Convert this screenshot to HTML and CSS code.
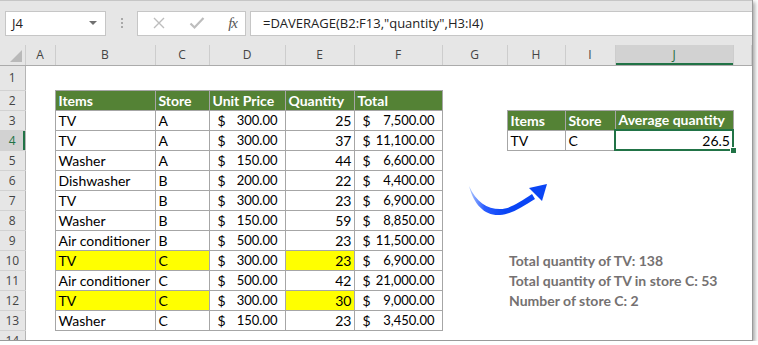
FILE: index.html
```html
<!DOCTYPE html>
<html lang="en">
<head>
  <meta charset="UTF-8">
  <title>DAVERAGE example</title>
  <link rel="stylesheet" href="styles.css">
</head>
<body>
  <div class="window">
    <div class="toolbar">
      <div class="namebox"><span>J4</span><span class="caret"></span></div>
      <div class="grip"><i></i><i></i><i></i></div>
      <div class="fxbox">
        <svg width="14" height="14" viewBox="0 0 14 14"><path d="M2 2 L12 12 M12 2 L2 12" stroke="#bdbdbd" stroke-width="1.4" fill="none"/></svg>
        <svg width="16" height="14" viewBox="0 0 16 14"><path d="M1.5 7.5 L5.5 11.5 L14.5 2" stroke="#bdbdbd" stroke-width="2.2" fill="none"/></svg>
        <span class="fx">fx</span>
      </div>
      <div class="formula">=DAVERAGE(B2:F13,"quantity",H3:I4)</div>
    </div>

    <table class="sheet">
      <colgroup>
        <col style="width:25px"><col style="width:30px"><col style="width:100px"><col style="width:54px">
        <col style="width:76px"><col style="width:69px"><col style="width:88px"><col style="width:65px">
        <col style="width:58px"><col style="width:50px"><col style="width:118px"><col>
      </colgroup>
      <tr class="colhead">
        <th class="corner"><span class="tri"></span></th>
        <th>A</th><th>B</th><th>C</th><th>D</th><th>E</th><th>F</th><th>G</th><th>H</th><th>I</th><th class="on">J</th><th></th>
      </tr>
      <tr class="r1"><th class="rh">1</th><td></td><td></td><td></td><td></td><td></td><td></td><td></td><td></td><td></td><td></td><td></td></tr>
      <tr><th class="rh">2</th><td></td>
        <td class="c hd">Items</td><td class="c hd">Store</td><td class="c hd">Unit Price</td><td class="c hd">Quantity</td><td class="c hd">Total</td>
        <td></td><td></td><td></td><td></td><td></td></tr>
      <tr><th class="rh">3</th><td></td>
        <td class="c">TV</td><td class="c">A</td><td class="c acc"><b>$</b>300.00</td><td class="c num">25</td><td class="c acc"><b>$</b>7,500.00</td>
        <td></td><td class="c hd">Items</td><td class="c hd">Store</td><td class="c hd">Average quantity</td><td></td></tr>
      <tr><th class="rh on">4</th><td></td>
        <td class="c">TV</td><td class="c">A</td><td class="c acc"><b>$</b>300.00</td><td class="c num">37</td><td class="c acc"><b>$</b>11,100.00</td>
        <td></td><td class="c">TV</td><td class="c">C</td><td class="c num sel">26.5<span class="handle"></span></td><td></td></tr>
      <tr><th class="rh">5</th><td></td>
        <td class="c">Washer</td><td class="c">A</td><td class="c acc"><b>$</b>150.00</td><td class="c num">44</td><td class="c acc"><b>$</b>6,600.00</td>
        <td></td><td></td><td></td><td></td><td></td></tr>
      <tr><th class="rh">6</th><td></td>
        <td class="c">Dishwasher</td><td class="c">B</td><td class="c acc"><b>$</b>200.00</td><td class="c num">22</td><td class="c acc"><b>$</b>4,400.00</td>
        <td></td><td></td><td></td><td></td><td></td></tr>
      <tr><th class="rh">7</th><td></td>
        <td class="c">TV</td><td class="c">B</td><td class="c acc"><b>$</b>300.00</td><td class="c num">23</td><td class="c acc"><b>$</b>6,900.00</td>
        <td></td><td></td><td></td><td></td><td></td></tr>
      <tr><th class="rh">8</th><td></td>
        <td class="c">Washer</td><td class="c">B</td><td class="c acc"><b>$</b>150.00</td><td class="c num">59</td><td class="c acc"><b>$</b>8,850.00</td>
        <td></td><td></td><td></td><td></td><td></td></tr>
      <tr><th class="rh">9</th><td></td>
        <td class="c">Air conditioner</td><td class="c">B</td><td class="c acc"><b>$</b>500.00</td><td class="c num">23</td><td class="c acc"><b>$</b>11,500.00</td>
        <td></td><td></td><td></td><td></td><td></td></tr>
      <tr><th class="rh">10</th><td></td>
        <td class="c hl">TV</td><td class="c hl">C</td><td class="c acc"><b>$</b>300.00</td><td class="c num hl">23</td><td class="c acc"><b>$</b>6,900.00</td>
        <td></td><td class="note">Total quantity of TV: 138</td><td></td><td></td><td></td></tr>
      <tr><th class="rh">11</th><td></td>
        <td class="c">Air conditioner</td><td class="c">C</td><td class="c acc"><b>$</b>500.00</td><td class="c num">42</td><td class="c acc"><b>$</b>21,000.00</td>
        <td></td><td class="note">Total quantity of TV in store C: 53</td><td></td><td></td><td></td></tr>
      <tr><th class="rh">12</th><td></td>
        <td class="c hl">TV</td><td class="c hl">C</td><td class="c acc"><b>$</b>300.00</td><td class="c num hl">30</td><td class="c acc"><b>$</b>9,000.00</td>
        <td></td><td class="note">Number of store C: 2</td><td></td><td></td><td></td></tr>
      <tr><th class="rh">13</th><td></td>
        <td class="c">Washer</td><td class="c">C</td><td class="c acc"><b>$</b>150.00</td><td class="c num">23</td><td class="c acc"><b>$</b>3,450.00</td>
        <td></td><td></td><td></td><td></td><td></td></tr>
      <tr><th class="rh">14</th><td></td><td></td><td></td><td></td><td></td><td></td><td></td><td></td><td></td><td></td><td></td></tr>
    </table>

    <svg class="arrow" width="753" height="341" viewBox="0 0 753 341">
      <defs>
        <linearGradient id="blue" gradientUnits="userSpaceOnUse" x1="468" y1="0" x2="505" y2="0">
          <stop offset="0" stop-color="#b9d0ff"/>
          <stop offset="0.45" stop-color="#2a5cff"/>
          <stop offset="1" stop-color="#0a45f5"/>
        </linearGradient>
      </defs>
      <path d="M469 186 C474 205 485 216 500 215 C512 214 522 207 535 199 L532 194 C520 202 510 209 500 209 C487 209 476 202 469 186 Z" fill="url(#blue)"/>
      <path d="M547 184 L529 188 L542 201 Z" fill="#0a45f5"/>
    </svg>
  </div>
</body>
</html>
```

FILE: styles.css
```css
body {
  margin: 0;
  background: #fff;
  font-family: Lato, "Liberation Sans", sans-serif;
}
.window {
  position: relative;
  width: 752px;
  height: 340px;
  overflow: hidden;
  background: #fff;
  border-right: 1px solid #9a9a9a;
  border-bottom: 1px solid #9a9a9a;
  box-shadow: 2px 2px 4px rgba(0,0,0,0.35);
}
.toolbar {
  display: flex;
  align-items: center;
  height: 44px;
  padding-left: 5px;
  background: #e6e6e6;
  border-top: 1px solid #c6c6c6;
}
.namebox, .fxbox, .formula {
  box-sizing: border-box;
  height: 25px;
  background: #fff;
  border: 1px solid #c6c6c6;
  display: flex;
  align-items: center;
  font-family: "Open Sans", "DejaVu Sans", sans-serif;
  font-size: 13px;
  color: #222;
}
.namebox {
  width: 101px;
  padding: 0 6px;
  justify-content: space-between;
}
.caret {
  width: 0;
  height: 0;
  border-left: 4px solid transparent;
  border-right: 4px solid transparent;
  border-top: 4px solid #707070;
  margin-right: 2px;
}
.grip {
  width: 31px;
  display: flex;
  flex-direction: column;
  align-items: center;
  gap: 2px;
}
.grip i {
  width: 2px;
  height: 2px;
  background: #a8a8a8;
}
.fxbox {
  width: 109px;
  padding: 0 8px 0 14px;
  justify-content: space-between;
}
.fx {
  font-family: "Liberation Serif", serif;
  font-style: italic;
  font-size: 15px;
  color: #555;
  letter-spacing: -1px;
}
.formula {
  flex: 1;
  margin-left: 4px;
  padding-left: 12px;
  border-right: none;
}

td, th {
  padding: 0;
  line-height: 17px;
  white-space: nowrap;
}
.sheet {
  width: 752px;
  table-layout: fixed;
  border-collapse: collapse;
  font-size: 14px;
  color: #000;
}
.sheet tr {
  height: 20px;
}
.sheet tr.r1 {
  height: 25px;
}
.colhead th {
  background: #e6e6e6;
  border-right: 1px solid #cdcdcd;
  border-bottom: 1px solid #ababab;
  font-family: "Open Sans", "DejaVu Sans", sans-serif;
  font-weight: normal;
  font-size: 12px;
  color: #444;
}
.colhead th.on {
  background: #d2d2d2;
  color: #1e6b41;
  box-shadow: inset 0 -2px #217346;
}
.corner {
  position: relative;
}
.tri {
  position: absolute;
  right: 3px;
  bottom: 3px;
  width: 0;
  height: 0;
  border-left: 12px solid transparent;
  border-bottom: 12px solid #b9b9b9;
}
.rh {
  background: #e6e6e6;
  border-right: 1px solid #b5b5b5;
  border-bottom: 1px solid #d2d2d2;
  font-family: "Open Sans", "DejaVu Sans", sans-serif;
  font-weight: normal;
  font-size: 12px;
  color: #444;
}
.rh.on {
  background: #d2d2d2;
  color: #217346;
  box-shadow: inset -2px 0 #217346;
}
.c {
  border: 1px solid #a6a6a6;
  padding: 0 3px;
  overflow: hidden;
}
.hd {
  background: #548235;
  color: #fff;
  font-weight: bold;
}
.hl {
  background: #ffff00;
}
.num {
  text-align: right;
  padding-right: 2px;
}
.acc {
  text-align: right;
  padding: 0 7px 0 8px;
  font-size: 13px;
}
.acc b {
  float: left;
  font-weight: normal;
  font-size: 14px;
}
.sel {
  position: relative;
  overflow: visible;
  border: 2px solid #217346;
  padding-right: 2px;
}
.handle {
  position: absolute;
  right: -5px;
  bottom: -5px;
  width: 5px;
  height: 5px;
  background: #217346;
  border: 1px solid #fff;
}
.note {
  overflow: visible;
  padding-left: 2px;
  font-weight: bold;
  color: #757171;
}
.arrow {
  position: absolute;
  left: 0;
  top: 0;
  pointer-events: none;
}
```
